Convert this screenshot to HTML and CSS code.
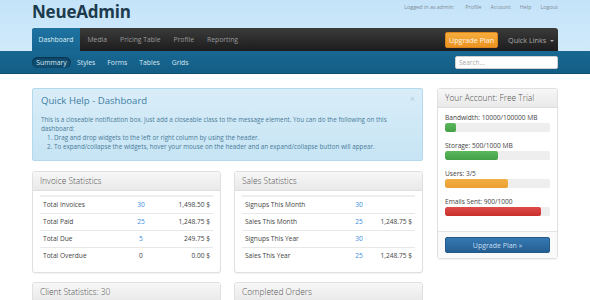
FILE: index.html
```html
<!DOCTYPE html>
<html lang="en">
<head>
    <meta charset="UTF-8">
    <title>NeueAdmin - Dashboard</title>
    <link rel="stylesheet" href="styles.css">
</head>
<body>
    <div class="header">
        <div class="container">
            <!-- Topo: logo e links -->
            <div class="top-bar">
                <h1 class="logo">NeueAdmin</h1>
                <ul class="user-links">
                    <li class="muted">Logged in as admin:</li>
                    <li>Profile</li>
                    <li>Account</li>
                    <li>Help</li>
                    <li>Logout</li>
                </ul>
            </div>
            <!-- Menu principal -->
            <div class="main-nav">
                <ul class="tabs">
                    <li class="active">Dashboard</li>
                    <li>Media</li>
                    <li>Pricing Table</li>
                    <li>Profile</li>
                    <li>Reporting</li>
                </ul>
                <div class="nav-right">
                    <button class="btn-orange">Upgrade Plan</button>
                    <span class="quick-links">Quick Links <span class="caret"></span></span>
                </div>
            </div>
        </div>
        <!-- Submenu -->
        <div class="sub-nav">
            <div class="container sub-inner">
                <ul class="sub-links">
                    <li class="active">Summary</li>
                    <li>Styles</li>
                    <li>Forms</li>
                    <li>Tables</li>
                    <li>Grids</li>
                </ul>
                <input class="search" type="text" placeholder="Search...">
            </div>
        </div>
    </div>

    <div class="container content">
        <div class="main-col">
            <div class="alert">
                <span class="close">&times;</span>
                <h3>Quick Help - Dashboard</h3>
                <p>This is a closeable notification box. Just add a closeable class to the message element. You can do the following on this dashboard:</p>
                <ol>
                    <li>Drag and drop widgets to the left or right column by using the header.</li>
                    <li>To expand/collapse the widgets, hover your mouse on the header and an expand/collapse button will appear.</li>
                </ol>
            </div>

            <div class="widgets">
                <div class="widget">
                    <div class="widget-head">Invoice Statistics</div>
                    <div class="widget-body">
                        <table class="stats invoices">
                            <tr><td>Total Invoices</td><td class="num link">30</td><td class="amt">1,498.50 $</td></tr>
                            <tr><td>Total Paid</td><td class="num link">25</td><td class="amt">1,248.75 $</td></tr>
                            <tr><td>Total Due</td><td class="num link">5</td><td class="amt">249.75 $</td></tr>
                            <tr><td>Total Overdue</td><td class="num">0</td><td class="amt">0.00 $</td></tr>
                        </table>
                    </div>
                </div>
                <div class="widget">
                    <div class="widget-head">Sales Statistics</div>
                    <div class="widget-body">
                        <table class="stats sales">
                            <tr><td>Signups This Month</td><td class="num link">30</td><td class="amt"></td></tr>
                            <tr><td>Sales This Month</td><td class="num link">25</td><td class="amt">1,248.75 $</td></tr>
                            <tr><td>Signups This Year</td><td class="num link">30</td><td class="amt"></td></tr>
                            <tr><td>Sales This Year</td><td class="num link">25</td><td class="amt">1,248.75 $</td></tr>
                        </table>
                    </div>
                </div>
                <div class="widget">
                    <div class="widget-head">Client Statistics: 30</div>
                    <div class="widget-body short"></div>
                </div>
                <div class="widget">
                    <div class="widget-head">Completed Orders</div>
                    <div class="widget-body short"></div>
                </div>
            </div>
        </div>

        <div class="side-col">
            <div class="widget">
                <div class="widget-head">Your Account: Free Trial</div>
                <div class="widget-body usage">
                    <div class="usage-item">
                        <div class="usage-label">Bandwidth: 10000/100000 MB</div>
                        <div class="progress"><div class="bar green" style="width: 10%"></div></div>
                    </div>
                    <div class="usage-item">
                        <div class="usage-label">Storage: 500/1000 MB</div>
                        <div class="progress"><div class="bar green" style="width: 50%"></div></div>
                    </div>
                    <div class="usage-item">
                        <div class="usage-label">Users: 3/5</div>
                        <div class="progress"><div class="bar orange" style="width: 60%"></div></div>
                    </div>
                    <div class="usage-item">
                        <div class="usage-label">Emails Sent: 900/1000</div>
                        <div class="progress"><div class="bar red" style="width: 91%"></div></div>
                    </div>
                </div>
                <div class="widget-foot">
                    <button class="btn-blue">Upgrade Plan &raquo;</button>
                </div>
            </div>
        </div>
    </div>
</body>
</html>
```

FILE: styles.css
```css
* {
    box-sizing: border-box;
}
body {
    margin: 0;
    font-family: "Open Sans", Arial, sans-serif;
    font-size: 7px;
    color: #444;
    background: #fff;
}
ul, ol {
    margin: 0;
    padding: 0;
}
.container {
    width: 526px;
    margin: 0 auto;
}

/* Cabeçalho */
.header {
    background: linear-gradient(to bottom, #c4e3f9 0%, #d3ebfb 60px, #d8eefc 100%);
}
.top-bar {
    height: 28px;
    display: flex;
    justify-content: space-between;
    align-items: flex-start;
}
.logo {
    margin: 0;
    font-family: "Open Sans", Arial, sans-serif;
    font-size: 17px;
    font-weight: 700;
    line-height: 23px;
    color: #1c3b4d;
    letter-spacing: -0.2px;
}
.user-links {
    list-style: none;
    display: flex;
    gap: 9px;
    padding-top: 3px;
    font-size: 5.4px;
    color: #7f8b93;
}
.user-links .muted {
    margin-right: 2px;
}
.main-nav {
    height: 23px;
    display: flex;
    justify-content: space-between;
    background: linear-gradient(to bottom, #3b3b3b, #1c1c1c);
    border-radius: 3px 3px 0 0;
}
.tabs {
    list-style: none;
    display: flex;
}
.tabs li {
    padding: 0 6.5px;
    line-height: 23px;
    font-size: 6.8px;
    color: #9a9a9a;
}
.tabs li.active {
    width: 48px;
    margin-right: 1px;
    text-align: center;
    padding: 0;
    color: #dcecf5;
    background: linear-gradient(to bottom, #1e73a1, #176591);
    border-radius: 3px 0 0 0;
}
.nav-right {
    display: flex;
    align-items: center;
}
.btn-orange {
    height: 16px;
    width: 53px;
    padding: 0;
    font-family: inherit;
    font-size: 7.2px;
    color: #fff5e6;
    background: linear-gradient(to bottom, #f6ad3c, #ec9320);
    border: 1px solid #d8861d;
    border-radius: 2px;
}
.quick-links {
    margin: 0 4px 0 10px;
    font-size: 7.2px;
    color: #a9a9a9;
}
.caret {
    display: inline-block;
    margin-left: 2px;
    vertical-align: middle;
    border-left: 2px solid transparent;
    border-right: 2px solid transparent;
    border-top: 2px solid #a9a9a9;
}
.sub-nav {
    height: 23px;
    background: linear-gradient(to bottom, #186893, #135d86);
    border-bottom: 1px solid #0f4f73;
}
.sub-inner {
    height: 22px;
    display: flex;
    justify-content: space-between;
    align-items: center;
}
.sub-links {
    list-style: none;
    display: flex;
}
.sub-links li {
    padding: 1px 6px;
    font-size: 6.8px;
    color: #d8e9f3;
}
.sub-links li.active {
    width: 39px;
    padding: 1px 0;
    margin-right: 0;
    text-align: center;
    background: #0f4d71;
    border-radius: 8px;
    box-shadow: inset 0 1px 2px rgba(0, 0, 0, 0.4);
}
.search {
    width: 103px;
    height: 13px;
    margin-top: 1px;
    padding: 0 3px;
    font-family: inherit;
    font-size: 6.5px;
    border: 1px solid #d0d0d0;
    border-radius: 2px;
    background: #fff;
}
.search::placeholder {
    color: #aaa;
}

/* Conteúdo */
.content {
    display: flex;
    gap: 14px;
    padding-top: 14px;
}
.main-col {
    width: 391px;
}
.side-col {
    width: 121px;
}
.alert {
    position: relative;
    height: 73px;
    padding: 5px 8px;
    background: linear-gradient(to bottom, #d9edf8, #c6e4f4);
    border: 1px solid #b4d9ec;
    border-radius: 2px;
    color: #4a7c99;
}
.alert h3 {
    margin: 0 0 8px;
    font-size: 9.6px;
    font-weight: 400;
    line-height: 13px;
    color: #3f7ea3;
}
.alert p {
    margin: 0;
    font-size: 6.3px;
    line-height: 9px;
}
.alert ol {
    padding-left: 13px;
    font-size: 6.3px;
    line-height: 9px;
}
.close {
    position: absolute;
    top: 3px;
    right: 7px;
    font-size: 9px;
    color: #b2ccd9;
}
.widgets {
    display: grid;
    grid-template-columns: 189px 189px;
    column-gap: 13px;
    row-gap: 9px;
    margin-top: 10px;
}
.widget {
    background: #fff;
    border: 1px solid #e0e0e0;
    border-radius: 3px;
    box-shadow: 0 1px 1px rgba(0, 0, 0, 0.05);
}
.widget-head {
    height: 19px;
    padding: 0 7px;
    line-height: 18px;
    font-size: 8.4px;
    font-weight: 300;
    color: #555;
    background: linear-gradient(to bottom, #f7f7f7, #e9e9e9);
    border-bottom: 1px solid #dedede;
    border-radius: 3px 3px 0 0;
}
.widget-body {
    padding: 4px 7px 8px;
}
.widget-body.short {
    height: 20px;
}
.stats {
    width: 100%;
    border-collapse: collapse;
    border-top: 2px solid #eee;
}
.stats td {
    height: 17px;
    padding: 0 3px;
    font-size: 6.6px;
    color: #444;
    border-bottom: 1px solid #e8e8e8;
}
.stats tr:last-child td {
    border-bottom: none;
}
.stats td.num {
    text-align: center;
}
.stats td.link {
    color: #3a8de0;
}
.stats td.amt {
    text-align: right;
}
.invoices td.num {
    width: 34px;
}
.invoices td.amt {
    width: 55px;
}
.sales td.num {
    width: 28px;
}
.sales td.amt {
    width: 42px;
}
.usage {
    padding: 5px 7px 6px;
}
.usage-item {
    margin-bottom: 9px;
}
.usage-label {
    font-size: 6.6px;
    line-height: 9px;
    color: #444;
}
.progress {
    height: 9px;
    margin-top: 1px;
    background: #eee;
    border-radius: 2px;
    overflow: hidden;
}
.bar {
    height: 100%;
    border-radius: 2px;
}
.bar.green {
    background: linear-gradient(to bottom, #5cb85c, #43a047);
}
.bar.orange {
    background: linear-gradient(to bottom, #f2ae43, #eba032);
}
.bar.red {
    background: linear-gradient(to bottom, #dd4c4a, #c9302c);
}
.widget-foot {
    padding: 5px 7px 5px;
    border-top: 1px solid #e5e5e5;
    background: #fafafa;
}
.btn-blue {
    width: 100%;
    height: 16px;
    padding: 0;
    font-family: inherit;
    font-size: 7px;
    color: #c8dff0;
    background: linear-gradient(to bottom, #3579b3, #255f93);
    border: 1px solid #245a89;
    border-radius: 2px;
}
```
